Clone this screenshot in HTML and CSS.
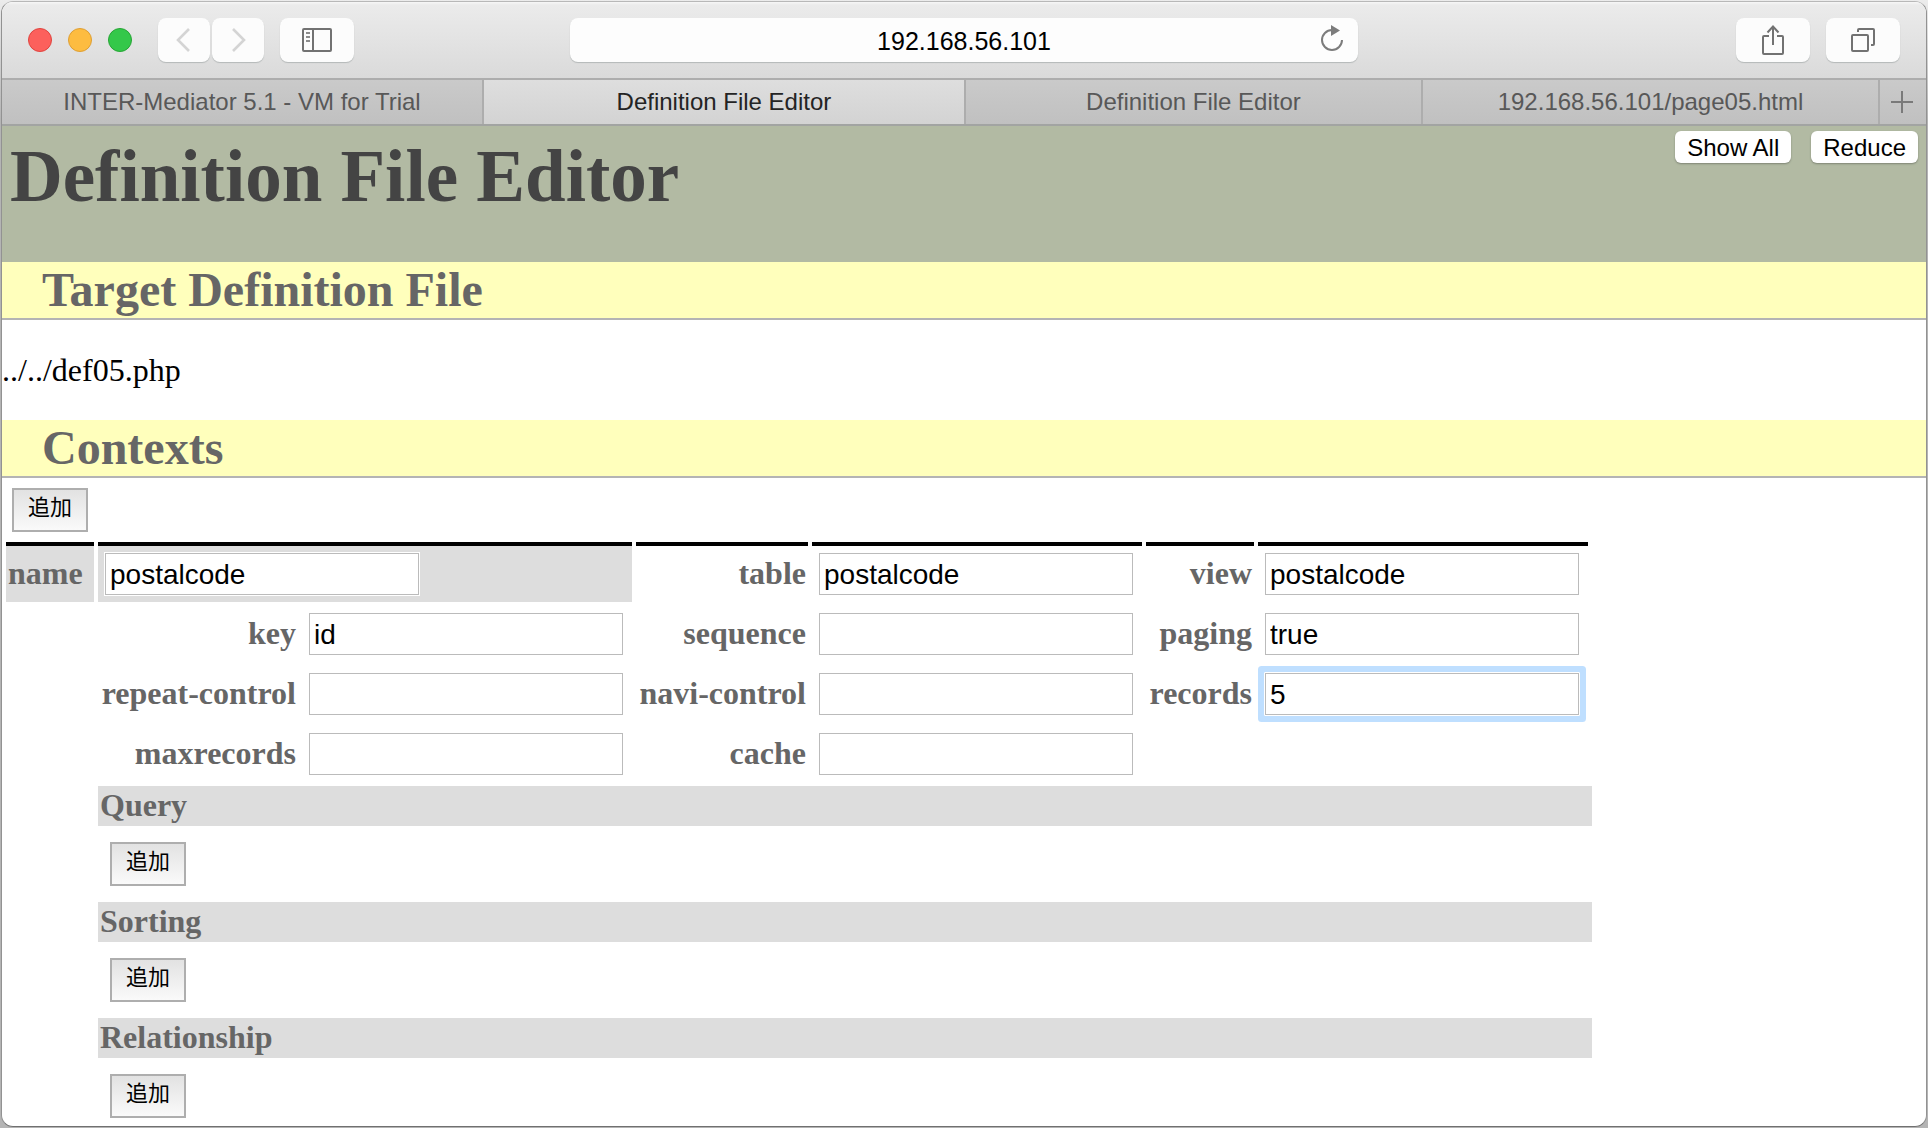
FILE: index.html
```html
<!DOCTYPE html>
<html lang="en">
<head>
<meta charset="utf-8">
<title>Definition File Editor</title>
<link rel="stylesheet" href="styles.css">
</head>
<body>
<div class="window">
  <div class="toolbar">
    <div class="toolbar-side">
      <div class="lights">
        <span class="light light-close"></span>
        <span class="light light-minimize"></span>
        <span class="light light-zoom"></span>
      </div>
      <div class="history">
        <button class="tool tool-nav" type="button" aria-label="Back">
          <svg width="16" height="26" viewBox="0 0 16 26"><path d="M13 2 2 13l11 11" fill="none" stroke="#d4d4d4" stroke-width="2.6"/></svg>
        </button>
        <button class="tool tool-nav" type="button" aria-label="Forward">
          <svg width="16" height="26" viewBox="0 0 16 26"><path d="m3 2 11 11L3 24" fill="none" stroke="#d4d4d4" stroke-width="2.6"/></svg>
        </button>
      </div>
      <button class="tool" type="button" aria-label="Sidebar">
        <svg width="30" height="24" viewBox="0 0 30 24"><rect x="1" y="1" width="28" height="22" rx="1" fill="none" stroke="#727272" stroke-width="2"/><path d="M11 1v22" stroke="#727272" stroke-width="2"/><path d="M4 5h4M4 9h4M4 13h4" stroke="#8c8c8c" stroke-width="2"/></svg>
      </button>
    </div>
    <div class="address">
      <input class="address-input" type="text" value="192.168.56.101" aria-label="Address">
      <button class="reload" type="button" aria-label="Reload">
        <svg width="24" height="28" viewBox="0 0 24 28"><path d="M12 5A10 10 0 1 0 22 15" fill="none" stroke="#7c7c7c" stroke-width="2"/><path d="M11 0v11l9-5.500z" fill="#7c7c7c"/></svg>
      </button>
    </div>
    <div class="toolbar-side toolbar-end">
      <button class="tool" type="button" aria-label="Share">
        <svg width="22" height="32" viewBox="0 0 22 32"><path d="M7 12H2a1 1 0 0 0-1 1v16a1 1 0 0 0 1 1h18a1 1 0 0 0 1-1V13a1 1 0 0 0-1-1h-5M11 21V3M5.500 8.500 11 2.500l5.500 6" fill="none" stroke="#727272" stroke-width="2"/></svg>
      </button>
      <button class="tool" type="button" aria-label="Show all tabs">
        <svg width="24" height="24" viewBox="0 0 24 24"><rect x="1" y="7" width="16" height="16" rx="1" fill="none" stroke="#727272" stroke-width="2"/><path d="M7 4V2a1 1 0 0 1 1-1h14a1 1 0 0 1 1 1v14a1 1 0 0 1-1 1h-2" fill="none" stroke="#727272" stroke-width="2"/></svg>
      </button>
    </div>
  </div>

  <nav class="tabs">
    <a class="tab tab-wide" href="#">INTER-Mediator 5.1 - VM for Trial</a>
    <a class="tab tab-wide tab-active" href="#" aria-current="page">Definition File Editor</a>
    <a class="tab" href="#">Definition File Editor</a>
    <a class="tab" href="#">192.168.56.101/page05.html</a>
    <button class="tab-add" type="button" aria-label="New tab">
      <svg width="22" height="22" viewBox="0 0 22 22"><path d="M11 0v22M0 11h22" stroke="#7a7a7a" stroke-width="2"/></svg>
    </button>
  </nav>

  <header class="page-header">
    <h1 class="page-title">Definition File Editor</h1>
    <div class="page-actions">
      <button class="push" type="button">Show All</button>
      <button class="push" type="button">Reduce</button>
    </div>
  </header>

  <main>
    <h2 class="section-title">Target Definition File</h2>
    <p class="file-path">../../def05.php</p>

    <h2 class="section-title">Contexts</h2>
    <div class="context-actions"><button class="add" type="button" lang="ja">追加</button></div>
    <table class="contexts">
      <colgroup>
        <col class="col-name"><col class="col-first"><col class="col-field"><col class="col-second"><col class="col-field"><col class="col-third"><col class="col-field"><col class="col-end">
      </colgroup>
      <tbody>
        <tr>
          <th class="first name"><label for="name">name</label></th>
          <td class="first name" colspan="2"><input class="field" id="name" type="text" value="postalcode"></td>
          <th class="first"><label for="table">table</label></th>
          <td class="first"><input class="field" id="table" type="text" value="postalcode"></td>
          <th class="first"><label for="view">view</label></th>
          <td class="first"><input class="field" id="view" type="text" value="postalcode"></td>
          <td class="end"></td>
        </tr>
        <tr>
          <td></td>
          <th><label for="key">key</label></th>
          <td><input class="field" id="key" type="text" value="id"></td>
          <th><label for="sequence">sequence</label></th>
          <td><input class="field" id="sequence" type="text"></td>
          <th><label for="paging">paging</label></th>
          <td><input class="field" id="paging" type="text" value="true"></td>
        </tr>
        <tr>
          <td></td>
          <th><label for="repeat-control">repeat-control</label></th>
          <td><input class="field" id="repeat-control" type="text"></td>
          <th><label for="navi-control">navi-control</label></th>
          <td><input class="field" id="navi-control" type="text"></td>
          <th><label for="records">records</label></th>
          <td><input class="field field-current" id="records" type="text" value="5"></td>
        </tr>
        <tr>
          <td></td>
          <th><label for="maxrecords">maxrecords</label></th>
          <td><input class="field" id="maxrecords" type="text"></td>
          <th><label for="cache">cache</label></th>
          <td><input class="field" id="cache" type="text"></td>
        </tr>
        <tr><td></td><th class="group" colspan="7">Query</th></tr>
        <tr><td></td><td class="group-body" colspan="7"><button class="add" type="button" lang="ja">追加</button></td></tr>
        <tr><td></td><th class="group" colspan="7">Sorting</th></tr>
        <tr><td></td><td class="group-body" colspan="7"><button class="add" type="button" lang="ja">追加</button></td></tr>
        <tr><td></td><th class="group" colspan="7">Relationship</th></tr>
        <tr><td></td><td class="group-body group-last" colspan="7"><button class="add" type="button" lang="ja">追加</button></td></tr>
      </tbody>
    </table>
  </main>
</div>
</body>
</html>
```
FILE: styles.css
```css
* {
  box-sizing: border-box;
}

body {
  display: flex;
  min-height: 100vh;
  margin: 0;
  padding: 1px;
  background: linear-gradient(#ececec, #b4b4b4 120px, #b4b4b4);
  color: #000;
  font: 32px/36px "Liberation Serif", "Times New Roman", serif;
}

button,
input {
  margin: 0;
  font-family: "Liberation Sans", Arial, sans-serif;
}

svg {
  display: block;
}

.window {
  flex: 1;
  min-width: 0;
  overflow: hidden;
  border: 1px solid #929292;
  border-top-color: #b8b8b8;
  border-bottom-color: #707070;
  border-radius: 12px;
  background: #fff;
}

/* Browser toolbar */
.toolbar {
  display: flex;
  align-items: center;
  height: 78px;
  padding: 0 26px;
  border-bottom: 2px solid #adadad;
  background: linear-gradient(#f7f7f7, #ebebeb 3px, #dadada);
}

.toolbar-side {
  display: flex;
  flex: 1;
  align-items: center;
  gap: 16px;
}

.toolbar-end {
  justify-content: flex-end;
}

.lights {
  display: flex;
  gap: 16px;
  margin-right: 10px;
}

.light {
  width: 24px;
  height: 24px;
  border: 1px solid;
  border-radius: 50%;
}

.light-close {
  border-color: #e0443f;
  background: #fc605c;
}

.light-minimize {
  border-color: #de9f34;
  background: #fdbc40;
}

.light-zoom {
  border-color: #27a535;
  background: #34c84a;
}

.history {
  display: flex;
  gap: 2px;
}

.tool {
  display: flex;
  align-items: center;
  justify-content: center;
  width: 74px;
  height: 44px;
  padding: 0;
  border: 0;
  border-radius: 8px;
  background: #fcfcfc;
  box-shadow: 0 1px 1px #b4b8b8;
}

.tool-nav {
  width: 52px;
}

.address {
  position: relative;
  width: 788px;
}

.address-input {
  display: block;
  width: 100%;
  height: 44px;
  padding: 2px 48px 0;
  border: 0;
  border-radius: 8px;
  background: #fdfdfd;
  box-shadow: 0 1px 1px #b4b8b8;
  font-size: 25px;
  text-align: center;
}

.reload {
  position: absolute;
  top: 7px;
  right: 14px;
  padding: 0;
  border: 0;
  background: none;
}

/* Tab bar */
.tabs {
  display: flex;
  height: 46px;
  border-bottom: 2px solid #a2a4a2;
  background: linear-gradient(#cacaca, #c0c0c0);
  font: 24px/44px "Liberation Sans", Arial, sans-serif;
}

.tab {
  flex: 457 1 0;
  overflow: hidden;
  border-right: 2px solid #adadad;
  color: #585858;
  text-align: center;
  text-decoration: none;
  white-space: nowrap;
}

.tab-wide {
  flex-grow: 482;
}

.tab-active {
  background: linear-gradient(#dedede, #d3d3d3);
  color: #242424;
}

.tab-add {
  display: flex;
  align-items: center;
  justify-content: center;
  width: 46px;
  padding: 0 2px 0 0;
  border: 0;
  background: none;
}

/* Page header */
.page-header {
  display: flex;
  align-items: flex-start;
  justify-content: space-between;
  min-height: 136px;
  padding: 5px 8px;
  background: #b2baa3;
}

.page-title {
  margin: 4px 0 0;
  color: #444;
  font-size: 73px;
  line-height: 84px;
}

.page-actions {
  display: flex;
  gap: 20px;
}

.push {
  height: 32px;
  padding: 2px 12px 0;
  border: 0;
  border-radius: 6px;
  background: #fff;
  box-shadow: 0 1px 2px #7e8474;
  color: #000;
  font-size: 24px;
  line-height: 30px;
}

/* Sections */
.section-title {
  margin: 0;
  padding-left: 40px;
  border-bottom: 2px solid #b4b4b4;
  background: #ffffbc;
  color: #666;
  font-size: 48px;
  line-height: 56px;
}

.file-path {
  margin: 32px 0;
}

.context-actions {
  padding: 10px 10px 6px;
}

.add {
  display: block;
  width: 76px;
  height: 44px;
  padding: 0 0 10px;
  border: 2px solid #aeaeae;
  background: linear-gradient(#e2e2e2, #fafafa);
  color: #000;
  font-family: "Noto Sans CJK JP", sans-serif;
  font-size: 22px;
  line-height: 28px;
}

/* Context table */
.contexts {
  width: 1594px;
  table-layout: fixed;
  border-spacing: 4px;
}

.col-name {
  width: 88px;
}

.col-first {
  width: 200px;
}

.col-second {
  width: 172px;
}

.col-third {
  width: 108px;
}

.col-field {
  width: 330px;
}

.col-end {
  width: 0;
}

.contexts td {
  padding: 2px;
}

.contexts th {
  padding: 1px 2px 3px;
  color: #666;
  text-align: right;
  white-space: nowrap;
}

.contexts .first {
  border-top: 4px solid #000;
}

.contexts .name {
  background: #ddd;
  text-align: left;
}

.contexts .end {
  padding: 0;
}

.contexts .group {
  background: #ddd;
  text-align: left;
}

.contexts .group-body {
  padding: 12px;
}

.contexts .group-last {
  padding-bottom: 4px;
}

.field {
  display: block;
  width: 316px;
  height: 44px;
  margin: 4px;
  padding: 2px 5px 0;
  border: 1px solid #fff;
  background: #fff;
  box-shadow: inset 0 0 0 1px #bbb;
  font-size: 28px;
}

.field-current {
  border-radius: 1px;
  box-shadow: inset 0 0 0 1px #bbb, 0 0 0 6px #bfdfff;
}
```
